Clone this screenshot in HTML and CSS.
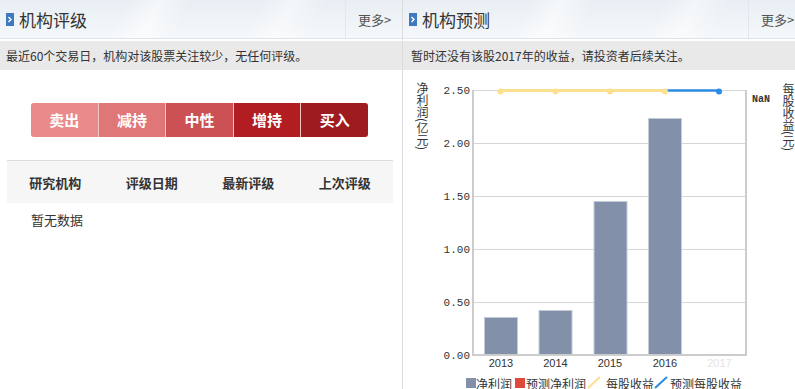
FILE: index.html
```html
<!DOCTYPE html>
<html lang="zh-CN">
<head>
    <meta charset="UTF-8">
    <title>机构评级 / 机构预测</title>
    <link rel="stylesheet" href="styles.css">
</head>
<body>
    <div class="page">
        <div class="panel panel-left">
            <div class="panel-head">
                <h3 class="panel-title">
                    <svg class="title-icon" width="8" height="13" viewBox="0 0 8 13"><rect width="8" height="13" fill="#3f79bf"/><polyline points="2.5,4 5,6.5 2.5,9" fill="none" stroke="#fff" stroke-width="1.4"/></svg>
                    机构评级
                </h3>
                <a class="more" href="#">更多&gt;</a>
            </div>
            <div class="notice">最近60个交易日，机构对该股票关注较少，无任何评级。</div>

            <div class="rating-scale">
                <span class="rate rate-1">卖出</span>
                <span class="rate rate-2">减持</span>
                <span class="rate rate-3">中性</span>
                <span class="rate rate-4">增持</span>
                <span class="rate rate-5">买入</span>
            </div>

            <table class="rating-table">
                <thead>
                    <tr>
                        <th>研究机构</th>
                        <th>评级日期</th>
                        <th>最新评级</th>
                        <th>上次评级</th>
                    </tr>
                </thead>
                <tbody>
                    <tr><td class="empty" colspan="4">暂无数据</td></tr>
                </tbody>
            </table>
        </div>

        <div class="panel panel-right">
            <div class="panel-head">
                <h3 class="panel-title">
                    <svg class="title-icon" width="8" height="13" viewBox="0 0 8 13"><rect width="8" height="13" fill="#3f79bf"/><polyline points="2.5,4 5,6.5 2.5,9" fill="none" stroke="#fff" stroke-width="1.4"/></svg>
                    机构预测
                </h3>
                <a class="more" href="#">更多&gt;</a>
            </div>
            <div class="notice notice-wide">暂时还没有该股2017年的收益，请投资者后续关注。</div>

            <div class="chart">
                <div class="axis-name axis-left">净利润(亿元)</div>
                <svg class="chart-plot" width="348" height="319" viewBox="0 0 348 319">
                    <!-- grid -->
                    <g stroke="#d6d6d6" stroke-width="1">
                        <line x1="43" y1="20.5" x2="316" y2="20.5"/>
                        <line x1="43" y1="73.5" x2="316" y2="73.5"/>
                        <line x1="43" y1="126.5" x2="316" y2="126.5"/>
                        <line x1="43" y1="179.5" x2="316" y2="179.5"/>
                        <line x1="43" y1="232.5" x2="316" y2="232.5"/>
                    </g>
                    <g class="tick">
                        <text x="40" y="24">2.50</text>
                        <text x="40" y="77">2.00</text>
                        <text x="40" y="130">1.50</text>
                        <text x="40" y="183">1.00</text>
                        <text x="40" y="236">0.50</text>
                        <text x="40" y="289">0.00</text>
                    </g>
                    <!-- bars -->
                    <g fill="#8290aa" stroke="#c3cbd9" stroke-width="1">
                        <rect x="54.5" y="247.5" width="33" height="38"/>
                        <rect x="109" y="240.5" width="33" height="45"/>
                        <rect x="164" y="131.5" width="33" height="154"/>
                        <rect x="218.5" y="48.5" width="33" height="237"/>
                    </g>
                    <!-- axes -->
                    <g stroke="#cccccc" stroke-width="2">
                        <line x1="43" y1="20" x2="43" y2="286"/>
                        <line x1="316" y1="20" x2="316" y2="286"/>
                        <line x1="42" y1="285" x2="317" y2="285"/>
                    </g>
                    <!-- eps lines -->
                    <line x1="70.5" y1="20.5" x2="235" y2="20.5" stroke="#fde08e" stroke-width="3"/>
                    <line x1="235" y1="20.5" x2="289" y2="20.5" stroke="#2b8ae2" stroke-width="2.5"/>
                    <g fill="#fde08e">
                        <circle cx="70.5" cy="21.5" r="3"/>
                        <circle cx="125.5" cy="21.5" r="3"/>
                        <circle cx="180" cy="21.5" r="3"/>
                        <circle cx="235" cy="21.5" r="3"/>
                    </g>
                    <circle cx="289" cy="21.5" r="3" fill="#2b8ae2"/>
                    <text class="nan" x="322" y="32">NaN</text>
                    <!-- years -->
                    <g class="year">
                        <text x="71" y="297">2013</text>
                        <text x="125.5" y="297">2014</text>
                        <text x="180" y="297">2015</text>
                        <text x="235" y="297">2016</text>
                        <text x="289.5" y="297" class="year-faded">2017</text>
                    </g>
                    <!-- legend -->
                    <g class="legend">
                        <rect x="36" y="308" width="10" height="10" fill="#8290aa"/>
                        <text x="46" y="318.5">净利润</text>
                        <rect x="85" y="308" width="10" height="10" fill="#e04a3a"/>
                        <text x="96" y="318.5">预测净利润</text>
                        <line x1="158" y1="318" x2="170" y2="307" stroke="#fde08e" stroke-width="2"/>
                        <text x="176" y="318.5">每股收益</text>
                        <line x1="225" y1="318" x2="237" y2="307" stroke="#2b8ae2" stroke-width="2"/>
                        <text x="240" y="318.5">预测每股收益</text>
                    </g>
                </svg>
                <div class="axis-name axis-right">每股收益(元)</div>
            </div>
        </div>
    </div>
</body>
</html>
```

FILE: styles.css
```css
body {
    margin: 0;
    padding: 0;
    font-family: "Noto Sans CJK SC", "Liberation Sans", sans-serif;
    color: #333;
    background-color: #fff;
    width: 795px;
    height: 389px;
    overflow: hidden;
}

.page {
    display: flex;
    width: 806px;
    height: 389px;
}

.panel {
    flex: none;
    width: 402px;
    height: 389px;
}

.panel-left {
    width: 403px;
    box-sizing: border-box;
    border-right: 1px solid #dcdcdc;
}

.panel-head {
    display: flex;
    height: 38px;
    border-bottom: 1px solid #dce5ed;
    margin-bottom: 2px;
    background-color: #edf2f6;
    background-image:
        linear-gradient(115deg, rgba(255,255,255,0) 30%, rgba(255,255,255,0.55) 38%, rgba(255,255,255,0) 46%),
        linear-gradient(115deg, rgba(255,255,255,0) 62%, rgba(255,255,255,0.45) 70%, rgba(255,255,255,0) 78%),
        linear-gradient(to bottom, #e8eef3, #f5f8fa);
}

.panel-title {
    flex: 1;
    display: flex;
    align-items: center;
    gap: 5px;
    margin: 0;
    padding-left: 6px;
    font-size: 17px;
    font-weight: normal;
    color: #333;
}

.title-icon {
    display: block;
    flex: none;
}

.more {
    flex: none;
    width: 57px;
    box-sizing: border-box;
    display: flex;
    align-items: center;
    padding-left: 12px;
    border-left: 1px solid #e1e7ec;
    font-size: 13px;
    color: #555;
    text-decoration: none;
}

.notice {
    height: 29px;
    line-height: 29px;
    padding-left: 6px;
    background-color: #e9e9e9;
    font-size: 12px;
    color: #333;
    white-space: nowrap;
}

.notice-wide {
    padding-left: 8px;
}

/* rating scale */
.rating-scale {
    display: flex;
    gap: 1px;
    width: 337px;
    height: 34px;
    margin: 33px 0 0 31px;
    background-color: #f2c6c6;
    border-radius: 3px;
    overflow: hidden;
}

.rate {
    flex: 1;
    text-align: center;
    line-height: 34px;
    font-size: 15px;
    font-weight: bold;
    color: #fff;
}

.rate-1 { background-color: #e98b8b; }
.rate-2 { background-color: #df7677; }
.rate-3 { background-color: #cc5154; }
.rate-4 { background-color: #b21d22; }
.rate-5 { background-color: #9e1b1f; }

.rating-table {
    width: 386px;
    margin: 23px 0 0 7px;
    border-collapse: collapse;
    table-layout: fixed;
}

.rating-table th {
    height: 42px;
    padding: 0;
    border-top: 1px solid #dddddd;
    background-color: #f6f6f6;
    font-size: 13px;
    font-weight: bold;
    color: #333;
    text-align: center;
}

.rating-table .empty {
    height: 32px;
    padding: 0 0 0 24px;
    font-size: 13px;
    color: #333;
    text-align: left;
}

/* forecast chart */
.chart {
    display: flex;
    align-items: flex-start;
    height: 319px;
}

.axis-name {
    writing-mode: vertical-rl;
    width: 14px;
    margin-top: 12px;
    font-size: 12px;
    line-height: 14px;
    color: #333;
    white-space: nowrap;
}

.axis-left {
    margin-left: 12px;
    margin-right: 1px;
}

.axis-right {
    margin-left: 3px;
    margin-top: 13px;
}

.chart-plot {
    display: block;
    flex: none;
}

.tick text {
    font-family: "Liberation Mono", monospace;
    font-size: 11px;
    fill: #333;
    text-anchor: end;
}

.nan {
    font-family: "Liberation Mono", monospace;
    font-size: 10px;
    font-weight: bold;
    fill: #333;
}

.year text {
    font-family: "Liberation Sans", sans-serif;
    font-size: 11px;
    fill: #333;
    text-anchor: middle;
}

.year .year-faded {
    fill: #e4e4e4;
}

.legend text {
    font-size: 12px;
    fill: #333;
}
```
